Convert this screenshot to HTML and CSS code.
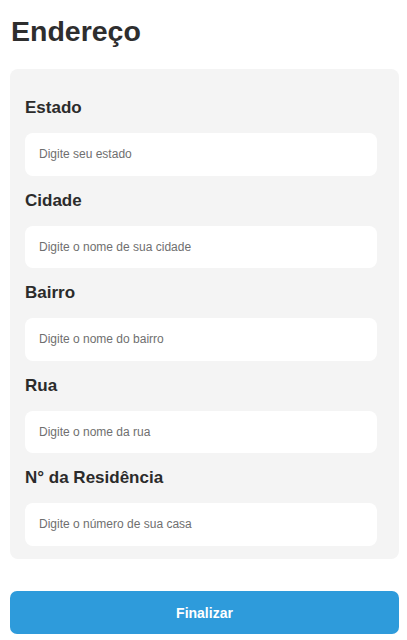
FILE: index.html
```html
<!DOCTYPE html>
<html lang="pt-BR">
<head>
<meta charset="utf-8">
<title>Endereço</title>
<link rel="stylesheet" href="styles.css">
</head>
<body>
<main class="page">
  <h1 class="title">Endereço</h1>
  <form class="card">
    <div class="field">
      <label class="label" for="estado">Estado</label>
      <input class="input" id="estado" type="text" placeholder="Digite seu estado">
    </div>
    <div class="field">
      <label class="label" for="cidade">Cidade</label>
      <input class="input" id="cidade" type="text" placeholder="Digite o nome de sua cidade">
    </div>
    <div class="field">
      <label class="label" for="bairro">Bairro</label>
      <input class="input" id="bairro" type="text" placeholder="Digite o nome do bairro">
    </div>
    <div class="field">
      <label class="label" for="rua">Rua</label>
      <input class="input" id="rua" type="text" placeholder="Digite o nome da rua">
    </div>
    <div class="field">
      <label class="label" for="numero">N° da Residência</label>
      <input class="input" id="numero" type="text" placeholder="Digite o número de sua casa">
    </div>
  </form>
  <button class="button" type="button">Finalizar</button>
</main>
</body>
</html>
```

FILE: styles.css
```css
* { box-sizing: border-box; }

html, body {
  margin: 0;
  padding: 0;
  background: #ffffff;
}

body {
  font-family: "Liberation Sans", Arial, sans-serif;
  color: #2b2b2b;
}

.page {
  padding: 0 8px 0 10px;
}

.title {
  margin: 0;
  padding-top: 14px;
  font-size: 28.5px;
  line-height: 34px;
  font-weight: 700;
  color: #2e2e2e;
  padding-left: 1px;
}

.card {
  margin-top: 21px;
  background: #f4f4f4;
  border-radius: 8px;
  padding: 29px 22px 13.5px 15px;
  display: flex;
  flex-direction: column;
  gap: 15px;
}

.field {
  display: flex;
  flex-direction: column;
  gap: 15px;
}

.label {
  display: block;
  font-size: 17px;
  line-height: 20px;
  font-weight: 700;
  color: #2b2b2b;
}

.input {
  display: block;
  width: 100%;
  height: 42.5px;
  border: none;
  outline: none;
  border-radius: 8px;
  background: #ffffff;
  padding: 0 14px;
  font-family: "Liberation Sans", Arial, sans-serif;
  font-size: 12px;
  color: #333;
}

.input::placeholder {
  color: #6f6f6f;
  opacity: 1;
}

.button {
  display: block;
  width: 100%;
  height: 43px;
  margin-top: 32px;
  border: none;
  border-radius: 7px;
  background: #2e9bdb;
  color: #ffffff;
  font-family: "Liberation Sans", Arial, sans-serif;
  font-size: 14px;
  font-weight: 700;
}
```
